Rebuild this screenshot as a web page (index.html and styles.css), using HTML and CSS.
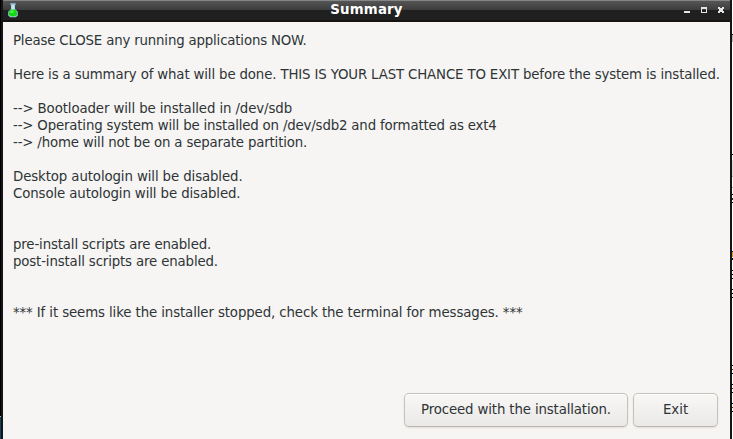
FILE: index.html
```
<!DOCTYPE html>
<html lang="en">
<head>
<meta charset="utf-8">
<title>Summary</title>
<link rel="stylesheet" href="styles.css">
</head>
<body>
<div class="desktop">
  <div class="edge-left"></div>
  <main class="window">
    <header class="titlebar">
      <svg class="flask" width="10" height="15" viewBox="0 0 10 15">
        <path d="M3 1.500V6L.2 8.800v3.600L2.200 14.200h5.600l2-1.800V8.800L7 6V1.500z" fill="#9bc5d8"/>
        <path d="M3.500 2h3v5h-3z" fill="#c4e8f5"/>
        <path d="M2.300 .3h5.400v1.500H2.300z" fill="#9fcde2"/>
        <path d="M2.800 6.500h4.400L9 9.200v2.600L7.200 13.300H2.800L1 11.800V9.200z" fill="#12d812"/>
        <path d="M3 7.500h2.500v2.500H2.300z" fill="#4dff43"/>
      </svg>
      <h1 class="title">Summary</h1>
      <svg class="controls" width="42" height="8" viewBox="0 0 42 8" shape-rendering="crispEdges">
        <path d="M0 4h6v2H0z" fill="#e4e4e4"/>
        <path fill-rule="evenodd" d="M17 0h6v6h-6zM18 2v3h4V2z" fill="#e4e4e4"/>
        <path d="M34 0h2v1h2V0h2v2h-1v2h1v2h-2V5h-2v1h-2V4h1V2h-1z" fill="#e4e4e4"/>
      </svg>
    </header>
    <section class="content">
      <pre class="message">Please CLOSE any running applications NOW.

<span class="lead">Here is a summary of what will be done. THIS IS YOUR LAST CHANCE TO EXIT before the system is installed.</span>

<span class="loose">--&gt; Bootloader will be installed in /dev/sdb</span>
--&gt; Operating system will be installed on /dev/sdb2 and formatted as ext4
--&gt; /home will not be on a separate partition.

<span class="loose">Desktop autologin will be disabled.
Console autologin will be disabled.</span>


<span class="lead">pre-install scripts are enabled.
post-install scripts are enabled.</span>


<span class="loose">*** If it seems like the installer stopped, check the terminal for messages. ***</span></pre>
      <div class="actions">
        <button class="button proceed">Proceed with the installation.</button>
        <button class="button exit">Exit</button>
      </div>
    </section>
  </main>
  <div class="edge-right"></div>
</div>
</body>
</html>
```
FILE: styles.css
```
* { box-sizing: border-box; }
body {
  margin: 0;
  overflow: hidden;
  font: 13.333px/17px "DejaVu Sans", sans-serif;
  color: #2e3436;
}
.desktop {
  display: grid;
  grid-template-columns: 1px 731px 1px;
  width: 733px;
  height: 439px;
}
.edge-left { background: linear-gradient(#000 416px, #b8b49a 416px 417px, #07475c 417px); }
.edge-right {
  background: linear-gradient(#fff 34px, #222 34px 35px, #bbb 35px 42px, #fff 42px 154px,
    #000 154px 155px, #fff 155px 160px, #ddd 160px 176px, #aaa 176px 177px, #fff 177px 187px,
    #aaa 187px 188px, #fff 188px 194px, #000 194px 195px, #fff 195px 198px, #222 198px 200px,
    #fff 200px 202px, #000 202px 203px, #fff 203px 251px, #222 251px 252px, #d59a27 252px 257px,
    #fff 257px 258px, #000 258px 260px, #fff 260px 270px, #000 270px 271px, #fff 271px 274px,
    #000 274px 275px, #fff 275px 278px, #000 278px 279px, #fff 279px 289px, #000 289px 290px,
    #fff 290px 293px, #000 293px 294px, #fff 294px 297px, #000 297px 298px, #fff 298px 365px,
    #000 365px 366px, #fff 366px 369px, #532 369px 370px, #fff 370px 373px, #000 373px 374px,
    #fff 374px 384px, #000 384px 385px, #fff 385px 388px, #532 388px 389px, #fff 389px 392px,
    #000 392px 393px, #fff 393px 403px, #000 403px 404px, #fff 404px 407px, #532 407px 408px,
    #fff 408px 411px, #000 411px 412px, #fff 412px);
}
.window {
  display: flex;
  flex-direction: column;
  min-width: 0;
  border: solid #151515;
  border-width: 0 2px;
  background: #f6f5f3;
}
.titlebar {
  display: grid;
  grid-template-columns: 48px 1fr 48px;
  height: 22px;
  border-top: 1px solid #858585;
  border-bottom: 2px solid #171311;
  background: linear-gradient(#555, #3c3c3c 9px, #202020 9px);
}
.flask { margin: 2px 0 0 5px; }
.title {
  margin: 0;
  text-align: center;
  font-size: 13.333px;
  line-height: 17px;
  letter-spacing: 0.2px;
  color: #fff;
}
.controls { margin: 6px 0 0 2px; }
.content {
  flex: 1;
  display: flex;
  flex-direction: column;
  justify-content: space-between;
  padding: 10px 12px 12px 10px;
}
.message {
  margin: 0;
  font: inherit;
  letter-spacing: -0.17px;
}
.lead { letter-spacing: -0.145px; }
.loose { letter-spacing: -0.11px; }
.actions { display: flex; justify-content: flex-end; gap: 5px; }
.button {
  height: 34px;
  padding: 0 0 2px;
  border: 1px solid #c5c2bc;
  border-bottom-color: #bdb5ac;
  border-radius: 5px;
  background: linear-gradient(#f8f7f6, #eae9e7);
  box-shadow: inset 0 1px #fff, 0 1px 2px #0000001a;
  font: inherit;
  color: inherit;
}
.proceed { width: 224px; letter-spacing: -0.14px; }
.exit { width: 85px; }
```
